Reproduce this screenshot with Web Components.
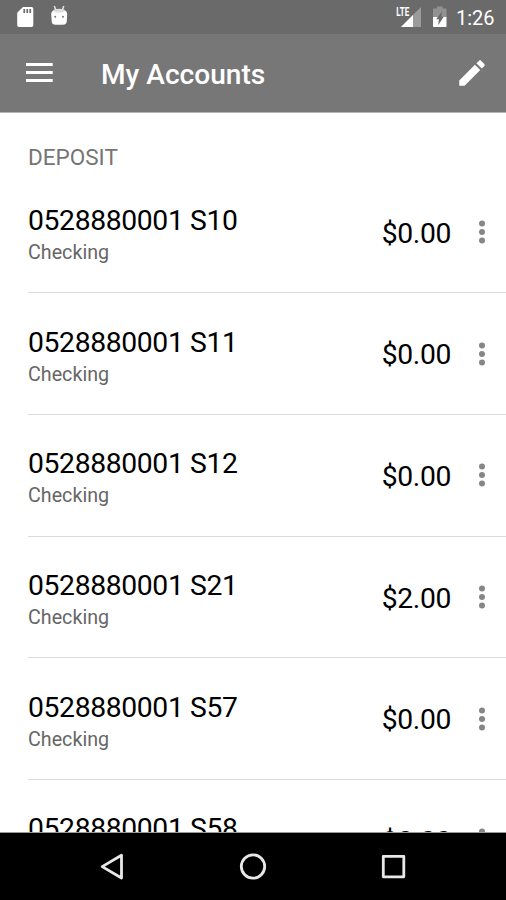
<!DOCTYPE html>
<html lang="en">
<head>
<meta charset="utf-8">
<title>My Accounts</title>
<style>
	html, body {
		margin: 0;
		height: 100%;
		overflow: hidden;
	}
	body {
		font-family: Roboto, sans-serif;
		background: #fff;
	}
</style>
</head>
<body>
<accounts-screen>
	<status-bar slot="top" time="1:26"></status-bar>
	<app-bar slot="top">My Accounts</app-bar>
	<account-group label="DEPOSIT">
		<account-row number="0528880001 S10" balance="$0.00">Checking</account-row>
		<account-row number="0528880001 S11" balance="$0.00">Checking</account-row>
		<account-row number="0528880001 S12" balance="$0.00">Checking</account-row>
		<account-row number="0528880001 S21" balance="$2.00">Checking</account-row>
		<account-row number="0528880001 S57" balance="$0.00">Checking</account-row>
		<account-row number="0528880001 S58" balance="$0.00">Checking</account-row>
	</account-group>
	<nav-bar slot="bottom"></nav-bar>
</accounts-screen>

<script>
function defineElement(name, html, setup) {
	const template = document.createElement("template");
	template.innerHTML = html;
	customElements.define(name,
		class extends HTMLElement {
			constructor() {
				super();
				this.attachShadow({mode: "open"})
					.appendChild(template.content.cloneNode(true));
				if(setup) {
					setup(this, this.shadowRoot);
				}
			}
		}
	);
}

defineElement("accounts-screen",
`<style>
	:host {
		display: flex;
		flex-direction: column;
		width: 506px;
		height: 900px;
		overflow: hidden;
	}
	main {
		flex: 1;
		min-height: 0;
		overflow: hidden;
	}
</style>
<slot name="top"></slot>
<main><slot></slot></main>
<slot name="bottom"></slot>`);

defineElement("status-bar",
`<style>
	:host {
		display: flex;
		justify-content: space-between;
		height: 34px;
		flex: none;
		background: #6a6a6a;
		color: #fff;
	}
	svg {
		display: block;
	}
	.right {
		display: flex;
	}
	.time {
		width: 50px;
		font-size: 20px;
		line-height: 36px;
		white-space: nowrap;
	}
</style>
<svg width="80" height="34" viewBox="0 0 80 34">
	<path fill="#fff" fill-rule="evenodd" d="M23 7h8.500q1.800 0 1.800 1.800v16.400q0 1.800-1.800 1.800H19q-1.800 0-1.800-1.800V12.800zM23.400 9v4h1.700V9zM26.400 9v4h1.700V9zM29.400 9v4h1.700V9z"/>
	<path d="M54.300 6l1.500 4M63.800 6l-1.500 4" stroke="#e4e4e4" stroke-width="1.500"/>
	<path fill="#fff" d="M51.200 14q0-4.800 8-4.800t8 4.800l-.5 7.500q-.4 3.300-3.700 3.300h-7.500q-3.400 0-3.800-3.300z"/>
	<ellipse cx="59.200" cy="10.700" rx="5.800" ry="1.900" fill="#ddd"/>
	<circle cx="55.200" cy="16.700" r="1" fill="#777"/>
	<circle cx="63" cy="16.700" r="1" fill="#777"/>
</svg>
<div class="right">
	<svg width="61" height="34" viewBox="395 0 61 34">
		<path fill="#9b9b9b" d="M421 7v20h-20z"/>
		<path fill="#fff" d="M413 15v12h-12z"/>
		<path fill="#6a6a6a" d="M395 6h15v11h-15z"/>
		<text x="396.200" y="16" font-size="12.500" font-weight="700" fill="#fff" textLength="13" lengthAdjust="spacingAndGlyphs">LTE</text>
		<path fill="#929292" d="M437 6.600h5.500v2h3.300q.7 0 .7.700V17H433V9.300q0-.7.700-.7h3.300z"/>
		<path fill="#fff" d="M433 17h13.500v9.300q0 .7-.7.700h-12.100q-.7 0-.7-.7z"/>
		<path fill="#6a6a6a" d="M442 11.500l-.7 5.200h2.400l-5.500 8.500.7-6h-2.800z"/>
	</svg>
	<div class="time"></div>
</div>`,
(host, root) => {
	root.querySelector(".time").textContent = host.getAttribute("time");
});

defineElement("app-bar",
`<style>
	:host {
		display: flex;
		align-items: center;
		box-sizing: border-box;
		height: 79px;
		flex: none;
		padding: 0 17px 0 22px;
		background: linear-gradient(#777 78px, #b5b5b5 78px);
		color: #fff;
	}
	.title {
		flex: 1;
		padding: 2px 0 0 45px;
		font-size: 28.1px;
		font-weight: 500;
		line-height: 34px;
		white-space: nowrap;
	}
	svg {
		display: block;
		fill: currentColor;
	}
	.menu {
		width: 34px;
		height: 34px;
		padding-bottom: 1px;
	}
	.edit {
		margin-bottom: 1px;
	}
</style>
<svg class="menu" viewBox="22 56 34 34">
	<path d="M26 63h26.700v3H26zM26 71h26.700v3H26zM26 79h26.700v3H26z"/>
</svg>
<div class="title"><slot></slot></div>
<svg class="edit" width="34" height="34" viewBox="0 0 24 24">
	<path d="M3 17.250V21h3.750L17.810 9.940l-3.750-3.750L3 17.250zM20.710 7.040c.390-.390.390-1.020 0-1.410l-2.340-2.340c-.390-.390-1.020-.390-1.410 0l-1.830 1.830 3.750 3.750 1.830-1.830z"/>
</svg>`);

defineElement("account-group",
`<style>
	:host {
		display: block;
		padding-left: 28px;
	}
	.label {
		height: 58.6px;
		padding-top: 31px;
		box-sizing: border-box;
		font-size: 22.5px;
		line-height: 27px;
		color: #757575;
	}
</style>
<div class="label"></div>
<slot></slot>`,
(host, root) => {
	root.querySelector(".label").textContent = host.getAttribute("label");
});

defineElement("account-row",
`<style>
	:host {
		display: flex;
		align-items: center;
		box-sizing: border-box;
		height: 121.67px;
		padding-right: 17px;
		border-bottom: 1px solid #dadada;
	}
	.info {
		flex: 1;
		padding-top: 8px;
	}
	.number, .balance {
		font-size: 28.3px;
		letter-spacing: -0.36px;
		line-height: 34px;
		color: #000;
		white-space: nowrap;
	}
	.balance {
		padding-top: 3.6px;
	}
	.type {
		font-size: 19.7px;
		line-height: 30px;
		color: #666;
	}
	svg {
		display: block;
		margin: 0 0 0 24px;
		fill: #868686;
	}
</style>
<div class="info">
	<div class="number"></div>
	<div class="type"><slot></slot></div>
</div>
<div class="balance"></div>
<svg width="14" height="26" viewBox="0 0 14 26">
	<circle cx="7" cy="4.5" r="3"/>
	<circle cx="7" cy="13" r="3"/>
	<circle cx="7" cy="21.5" r="3"/>
</svg>`,
(host, root) => {
	root.querySelector(".number").textContent = host.getAttribute("number");
	root.querySelector(".balance").textContent = host.getAttribute("balance");
});

defineElement("nav-bar",
`<style>
	:host {
		display: flex;
		justify-content: center;
		align-items: center;
		gap: 106px;
		flex: none;
		box-sizing: border-box;
		height: 68px;
		border-top: 1px solid #999;
		background: #000;
	}
	svg {
		display: block;
		fill: none;
		stroke: #e8e8e8;
		stroke-width: 2.8;
		stroke-linejoin: round;
	}
</style>
<svg width="34" height="34" viewBox="0 0 34 34"><path d="M25.500 5.200v22.800L6.200 16.600z"/></svg>
<svg width="34" height="34" viewBox="0 0 34 34"><circle cx="17" cy="16.5" r="11.7"/></svg>
<svg width="34" height="34" viewBox="0 0 34 34"><path d="M7.300 6.300h20.500v20.500H7.300z"/></svg>`);
</script>
</body>
</html>
